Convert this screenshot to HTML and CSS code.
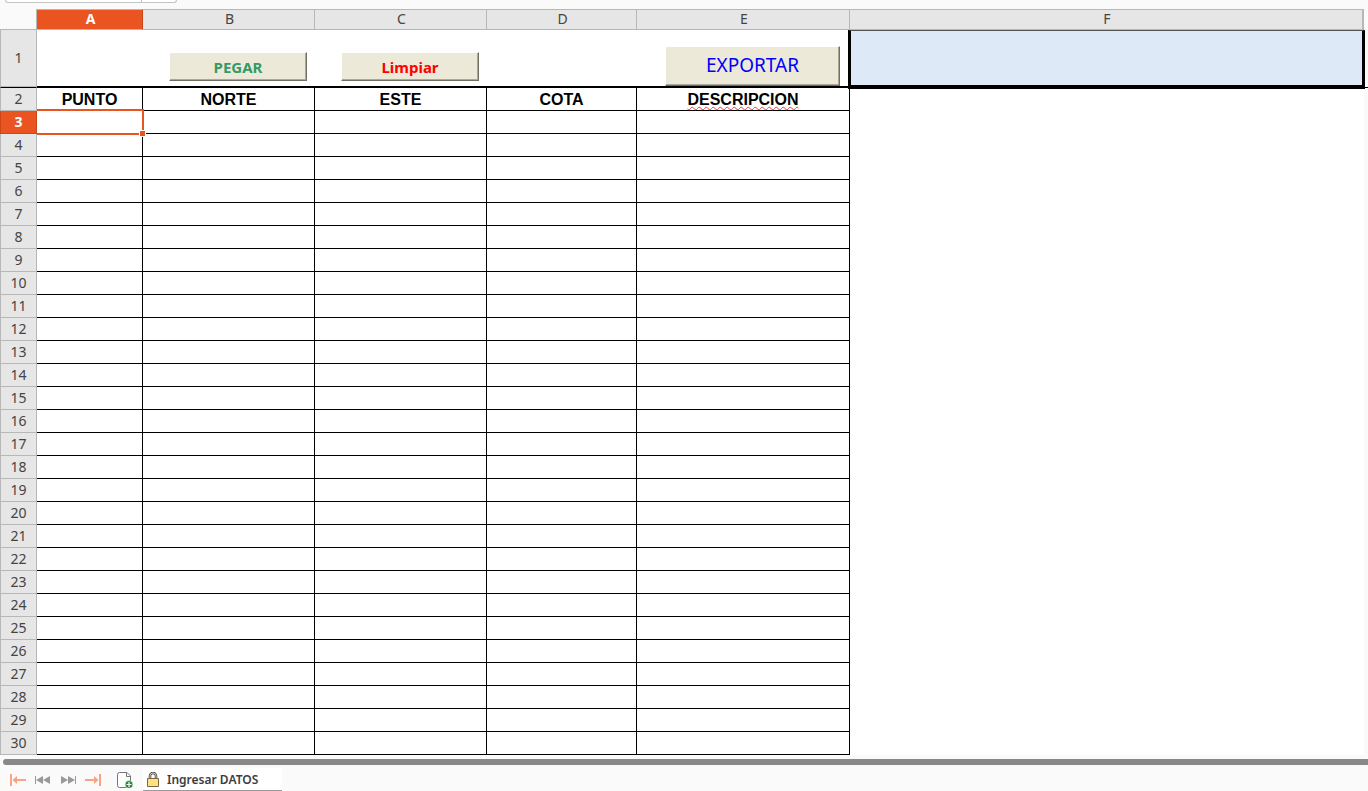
FILE: index.html
```html
<!DOCTYPE html>
<html lang="es">

	<head>
		<meta charset="utf-8">
		<title>Ingresar DATOS</title>
		<link rel="stylesheet" href="styles.css">
	</head>

	<body>
		<div class="topbar">
			<div class="namebox"></div>
		</div>

		<div class="sheet">
			<table class="grid">
				<colgroup>
					<col class="col-num">
					<col class="col-a">
					<col class="col-b">
					<col class="col-c">
					<col class="col-d">
					<col class="col-e">
					<col>
				</colgroup>
				<thead>
					<tr>
						<td class="corner"></td>
						<th scope="col" class="active">A</th>
						<th scope="col">B</th>
						<th scope="col">C</th>
						<th scope="col">D</th>
						<th scope="col">E</th>
						<th scope="col" class="last">F</th>
					</tr>
				</thead>
				<tbody id="tbody">
					<tr class="tools">
						<th scope="row">1</th>
						<td></td>
						<td><button type="button" class="btn paste">PEGAR</button></td>
						<td><button type="button" class="btn clear">Limpiar</button></td>
						<td></td>
						<td class="wide"><button type="button" class="btn export">EXPORTAR</button></td>
						<td class="path"></td>
					</tr>
					<tr class="titles">
						<th scope="row">2</th>
						<td>PUNTO</td>
						<td>NORTE</td>
						<td>ESTE</td>
						<td>COTA</td>
						<td><span class="spell">DESCRIPCION</span></td>
						<td class="blank"></td>
					</tr>
				</tbody>
			</table>
		</div>

		<div class="scroll"><div class="thumb"></div></div>

		<div class="tabs">
			<button type="button" class="nav" aria-label="Primera hoja">
				<svg width="16" height="16" viewBox="0 0 16 16"><path d="M0 2h2v12H0zM6 7h10v2H6z" fill="#f8a383"/><path d="M2.500 8L7 4v8z" fill="#f8a383"/></svg>
			</button>
			<button type="button" class="nav" aria-label="Hoja anterior">
				<svg width="16" height="16" viewBox="0 0 16 16"><path d="M0 4h1v8H0zM1 8l7-4v8zM8 8l7-4v8z" fill="#999"/></svg>
			</button>
			<button type="button" class="nav" aria-label="Hoja siguiente">
				<svg width="16" height="16" viewBox="0 0 16 16"><path d="M15 4h1v8h-1zM15 8L8 4v8zM8 8L1 4v8z" fill="#999"/></svg>
			</button>
			<button type="button" class="nav" aria-label="Última hoja">
				<svg width="16" height="16" viewBox="0 0 16 16"><path d="M14 2h2v12h-2zM0 7h10v2H0z" fill="#f8a383"/><path d="M13.500 8L9 4v8z" fill="#f8a383"/></svg>
			</button>
			<button type="button" class="nav add" aria-label="Agregar hoja">
				<svg width="16" height="16" viewBox="0 0 16 16">
					<path d="M2.500.5H10L13.500 4v11.500h-11a2 2 0 0 1-2-2v-11a2 2 0 0 1 2-2z" fill="#fff" stroke="#777"/>
					<path d="M9.500.5V4.500h4" fill="none" stroke="#777"/>
					<circle cx="12" cy="12.500" r="3.900" fill="#188a2c" stroke="#fafafa" stroke-width=".6"/>
					<path d="M9.500 12.500h5M12 10v5" stroke="#fff" stroke-width="1.200"/>
				</svg>
			</button>
			<button type="button" class="tab">
				<svg width="12" height="15" viewBox="0 0 12 15">
					<path d="M3 7V4a3 3 0 0 1 6 0v3" fill="none" stroke="#555" stroke-width="2.600"/>
					<path d="M3 7V4a3 3 0 0 1 6 0v3" fill="none" stroke="#eadb9d" stroke-width=".8"/>
					<path d="M.5 6.500h11v8H.5z" fill="#ffe27f" stroke="#75694a"/>
				</svg>
				Ingresar DATOS
			</button>
		</div>

		<script>
			var tbody = document.querySelector("#tbody");
			for (var i = 3; i <= 30; i++) {
				var tr = document.createElement("tr");
				tr.innerHTML = `<th scope="row">${i}</th><td></td><td></td><td></td><td></td><td></td><td class="blank"></td>`;
				if (i === 3) {
					tr.children[0].className = "active";
					tr.children[1].className = "selected";
				}
				tbody.appendChild(tr);
			}
		</script>
	</body>

</html>
```
FILE: styles.css
```css
*,
*::before,
*::after {
	box-sizing: border-box;
	margin: 0;
	padding: 0;
}

body {
	background: #fafafa;
	overflow: hidden;
	font-family: "Noto Sans", sans-serif;
	font-size: 14px;
	color: #444;
}

/* formula bar edge */
.topbar {
	height: 9px;
	padding-left: 5px;
}

.namebox {
	width: 172px;
	height: 3px;
	border: 1px solid #c4c4c4;
	border-top: 0;
	border-radius: 0 0 5px 5px;
	background: linear-gradient(#c4c4c4, #c4c4c4) 135px 0 / 1px 3px no-repeat #fff;
}

/* grid */
.sheet {
	padding-right: 4px;
}

.grid {
	width: 100%;
	table-layout: fixed;
	border-collapse: separate;
	border-spacing: 0;
}

.col-num {
	width: 37px;
}

.col-a {
	width: 106px;
}

.col-b,
.col-c {
	width: 172px;
}

.col-d {
	width: 150px;
}

.col-e {
	width: 213px;
}

.grid th {
	background: #e6e6e6;
	border-right: 1px solid #b7b7b7;
	border-bottom: 1px solid #b7b7b7;
	font-weight: normal;
	line-height: 18px;
}

.grid thead th {
	height: 21px;
	padding: 0 0 2px 2px;
	border-top: 1px solid #b7b7b7;
	line-height: 16px;
}

.grid thead .last {
	border-right-width: 2px;
}

.grid tbody th {
	border-left: 1px solid #b7b7b7;
}

.grid .corner {
	border: 0;
	border-right: 1px solid #b7b7b7;
	border-bottom: 1px solid #b7b7b7;
	background: #fafafa;
}

.grid th.active {
	background: #e95420;
	border-color: #c9451a;
	color: #fff;
	font-weight: bold;
}

.grid thead th.active {
	border-top-color: #b7b7b7;
	border-bottom-color: #b7b7b7;
}

.grid td {
	height: 23px;
	background: #fff;
	border-right: 1px solid #000;
	border-bottom: 1px solid #000;
}

.grid thead td {
	height: 21px;
}

.grid td.blank {
	border: 0;
}

.grid .tools th {
	padding-bottom: 2px;
	border-bottom-color: #000;
	box-shadow: inset 0 -1px #b7b7b7;
}

.grid .tools td {
	height: 58px;
	padding: 22px 0 0 26px;
	border-right: 0;
	border-bottom-width: 2px;
	vertical-align: top;
}

.grid .tools .wide {
	padding: 16px 0 0 28px;
}

.grid .tools .path {
	position: relative;
	background: #dde9f6;
}

/* thick frame drawn over the neighbouring cells */
.path::after {
	content: "";
	position: absolute;
	inset: 0 -1px -3px -2px;
	border: 3px solid #000;
	border-top: 1px solid #555;
	border-bottom-width: 4px;
}

.path::before {
	content: "";
	position: absolute;
	right: -4px;
	bottom: -2px;
	width: 4px;
	height: 1px;
	background: #000;
}

.grid .titles td {
	padding-top: 2px;
	font-family: "Liberation Sans", sans-serif;
	font-size: 16px;
	font-weight: bold;
	line-height: 18px;
	color: #000;
	text-align: center;
}

.spell {
	text-decoration: underline wavy #f33 1px;
	text-decoration-skip-ink: none;
	text-underline-offset: 1px;
}

.grid .selected {
	position: relative;
}

.selected::before {
	content: "";
	position: absolute;
	inset: -2px -2px -2px 0;
	border: 2px solid #e95420;
	border-left: 0;
}

.selected::after {
	content: "";
	position: absolute;
	right: -4px;
	bottom: -4px;
	width: 7px;
	height: 7px;
	border: 1px solid #fff;
	background: #e95420;
}

/* buttons placed on the sheet */
.btn {
	display: block;
	width: 138px;
	height: 29px;
	background: #ece9d8;
	border: 1px solid #fff;
	border-right-color: #716f64;
	border-bottom-color: #716f64;
	box-shadow: inset -1px -1px #aca899;
	font-family: "Noto Sans", sans-serif;
	font-size: 15px;
	font-weight: bold;
}

.paste {
	color: #339966;
}

.clear {
	color: #f00;
}

.export {
	width: 175px;
	height: 40px;
	padding-bottom: 2px;
	font-size: 19px;
	font-weight: normal;
	color: #00f;
}

/* scroll bar */
.scroll {
	padding: 4px 0 0 3px;
}

.thumb {
	height: 6px;
	border-radius: 3px 0 0 3px;
	background: #888;
}

/* sheet tabs */
.tabs {
	display: flex;
	align-items: center;
	gap: 9px;
	height: 26px;
	padding: 3px 0 0 10px;
}

.nav {
	width: 16px;
	height: 16px;
	border: 0;
	background: none;
}

.nav svg {
	display: block;
}

.add {
	width: 17px;
	margin-left: 7px;
}

.tab {
	display: flex;
	align-items: center;
	gap: 8px;
	height: 23px;
	width: 139px;
	padding-left: 4px;
	border: 0;
	border-bottom: 1px solid #999;
	background: #fff;
	font-family: "Noto Sans", sans-serif;
	font-size: 12px;
	font-weight: 600;
	color: #3d3d3d;
	white-space: nowrap;
}
```
